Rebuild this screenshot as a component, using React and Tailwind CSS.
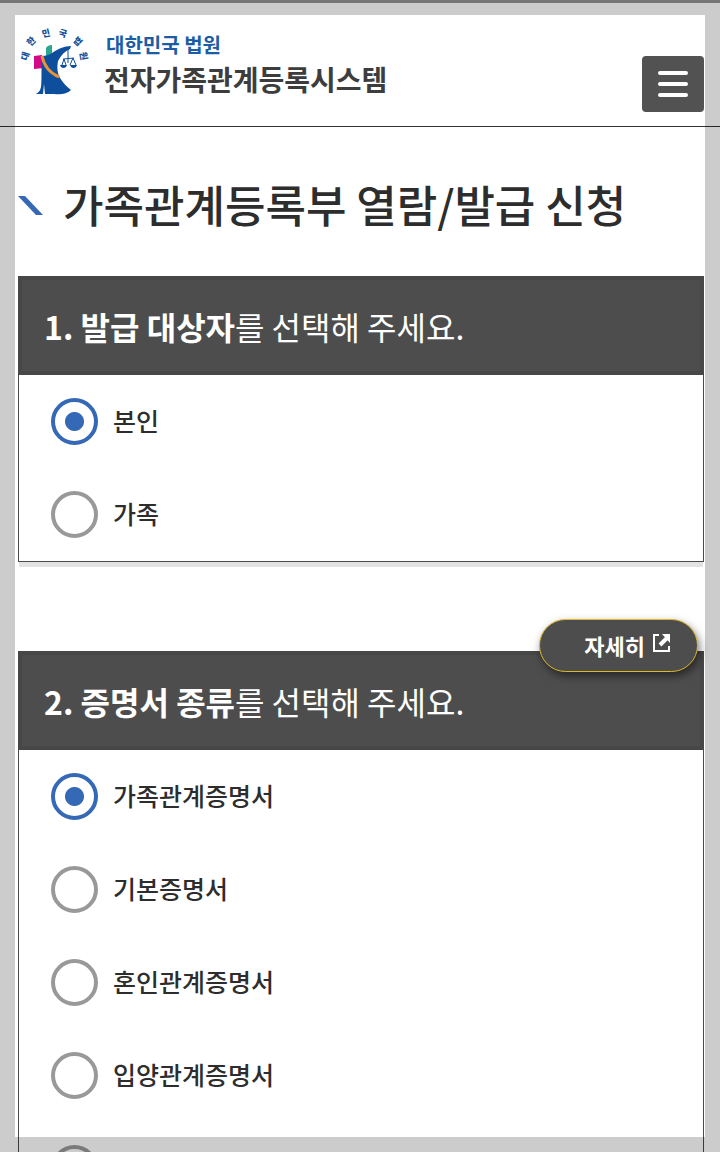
import React, { useState } from "react";

const targets = ["본인", "가족"];

const certificates = [
    "가족관계증명서",
    "기본증명서",
    "혼인관계증명서",
    "입양관계증명서",
    "친양자입양관계증명서",
];

// letters set in an arc over the emblem
const arcLetters = [
    { char: "대", x: 7, y: 31, angle: -72 },
    { char: "한", x: 13, y: 16, angle: -45 },
    { char: "민", x: 28, y: 8, angle: -14 },
    { char: "국", x: 45, y: 8, angle: 16 },
    { char: "법", x: 60, y: 16, angle: 44 },
    { char: "원", x: 66, y: 31, angle: 80 },
];

const CourtEmblem = () => (
    <svg
        width="74"
        height="74"
        viewBox="0 0 74 74"
        className="overflow-visible"
        aria-hidden="true"
    >
        {arcLetters.map((item) => (
            <text
                key={item.char}
                x={item.x}
                y={item.y}
                transform={`rotate(${item.angle} ${item.x} ${item.y})`}
                textAnchor="middle"
                dominantBaseline="central"
                fontSize="9"
                fontWeight="900"
                fill="#14509a"
            >
                {item.char}
            </text>
        ))}
        <path d="M28 23c1-2 3-3 6-3v9l-4 2h-2z" fill="#2aa78c" />
        <path d="M16 31l8-1 2 13-10 1z" fill="#d10a85" />
        <path
            d="M24 31c4 0 7-1 10-3 6-4 12-7 19-7l-1 3c-5 2-9 6-12 12-1 6-1 11 2 17 3 5 7 9 11 12-4 4-10 5-17 4H27l-1-10-1 10h-7c3-2 4-3 5-7 1-8 0-14 1-31z"
            fill="#0d4f9c"
        />
        <path
            d="M24 31c2 10 8 17 17 21"
            fill="none"
            stroke="#e8923a"
            strokeWidth="3"
        />
        <path
            d="M50 22v16M45 34l11-1M46 34l-2 6M46 34l2 6M55 33l-3 7M55 33l3 7"
            fill="none"
            stroke="#0d4f9c"
            strokeWidth="1"
        />
        <path d="M42 40h7c-1 4-6 4-7 0zM52 40h7c-1 4-6 4-7 0z" fill="#0d4f9c" />
    </svg>
);

const DetailIcon = () => (
    <svg
        width="18"
        height="20"
        viewBox="0 0 18 20"
        fill="none"
        stroke="white"
        aria-hidden="true"
    >
        <path d="M6 2H1v16h15v-5" strokeWidth="2" />
        <path d="M7 12l7-7" strokeWidth="4" />
        <path d="M9 1h8v9z" fill="white" stroke="none" />
    </svg>
);

const RadioRow = ({ name, label, checked, onChange }) => (
    <label className="flex h-[93px] items-center gap-[15px] pl-8 text-[25px] leading-6 font-medium text-[#2d2d2d]">
        <input
            type="radio"
            name={name}
            checked={checked}
            onChange={onChange}
            className="size-[47px] shrink-0 appearance-none rounded-full border-4 border-[#999] bg-white checked:border-[#3568b5] checked:bg-[radial-gradient(circle,#3568b5_9px,white_10px)]"
        />
        <span className="pb-1">{label}</span>
    </label>
);

const Section = ({ name, strong, rest, options, action }) => {
    const [selected, setSelected] = useState(options[0]);

    return (
        <section className="relative">
            <h2 className="flex h-[99px] items-center border-4 border-[#474747] bg-[#4d4d4d] px-[22px] text-[32px] text-white">
                <span>
                    <strong className="font-bold">{strong}</strong>
                    {rest}
                </span>
            </h2>
            {action}
            <div
                role="radiogroup"
                aria-label={strong}
                className="border-x border-b border-[#4a4a4a] shadow-[0_6px_0_-1px_#e2e2e2]"
            >
                {options.map((option) => (
                    <RadioRow
                        key={option}
                        name={name}
                        label={option}
                        checked={selected === option}
                        onChange={() => setSelected(option)}
                    />
                ))}
            </div>
        </section>
    );
};

const App = () => {
    return (
        <div className="h-screen overflow-y-auto bg-white font-['Noto_Sans_CJK_KR',sans-serif] [scrollbar-width:none]">
            <div className="pointer-events-none fixed inset-0 z-10 border-[15px] border-black/20" />
            <div className="pointer-events-none fixed inset-x-0 top-0 z-20 h-[3px] bg-[#777]" />

            <header className="flex h-[127px] items-start justify-between border-b border-[#333] pr-4 pl-[18px]">
                <a href="#" className="flex gap-3 pt-[25px]">
                    <CourtEmblem />
                    <span className="flex flex-col pt-1.5">
                        <span className="pl-0.5 text-[20px] leading-7 font-bold text-[#1c5da6]">
                            대한민국 법원
                        </span>
                        <span className="text-[28px] leading-10 font-bold text-[#3d3d3d]">
                            전자가족관계등록시스템
                        </span>
                    </span>
                </a>
                <button
                    type="button"
                    aria-label="메뉴"
                    className="mt-14 flex h-14 w-[62px] flex-col items-center justify-center gap-[7px] rounded-sm bg-[#525252]"
                >
                    <span className="h-1 w-[30px] rounded-xs bg-white" />
                    <span className="h-1 w-[30px] rounded-xs bg-white" />
                    <span className="h-1 w-[30px] rounded-xs bg-white" />
                </button>
            </header>

            <main className="pr-4 pl-[18px]">
                <div className="flex h-[149px] items-center gap-5 pt-2">
                    <svg width="25" height="20" viewBox="0 0 25 20" aria-hidden="true">
                        <path d="M0 0h7l18 19h-7z" fill="#3568b5" />
                    </svg>
                    <h1 className="pb-1 text-[44px] font-medium text-[#2d2d2d]">
                        가족관계등록부 열람/발급 신청
                    </h1>
                </div>

                <div className="flex flex-col gap-[89px]">
                    <Section
                        name="target"
                        strong="1. 발급 대상자"
                        rest="를 선택해 주세요."
                        options={targets}
                    />
                    <Section
                        name="certificate"
                        strong="2. 증명서 종류"
                        rest="를 선택해 주세요."
                        options={certificates}
                        action={
                            <button
                                type="button"
                                className="absolute -top-8 right-1.5 flex h-[53px] items-center gap-2 rounded-full border border-[#e0b92a] bg-[#4d4d4d] pr-[26px] pl-11 text-[22px] font-bold text-white shadow-[2px_4px_8px_rgba(0,0,0,0.5)]"
                            >
                                자세히
                                <span className="pb-1.5">
                                    <DetailIcon />
                                </span>
                            </button>
                        }
                    />
                </div>
            </main>
        </div>
    );
};

export default App;
